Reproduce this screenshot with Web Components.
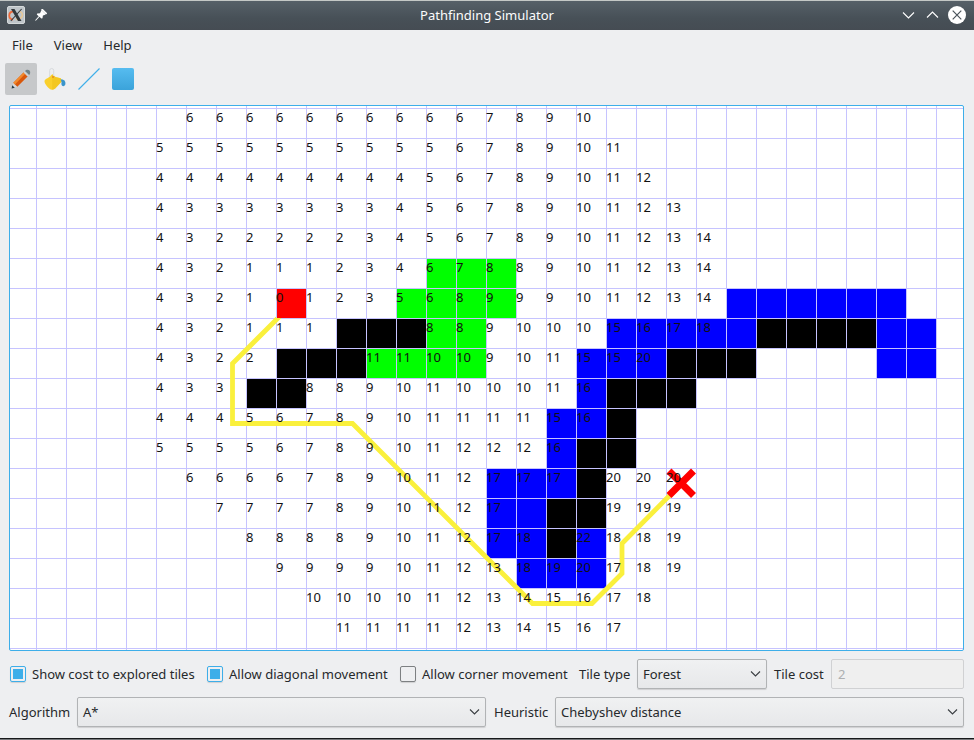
<!DOCTYPE html>
<html lang="en">
<head>
<meta charset="utf-8">
<title>Pathfinding Simulator</title>
<style>
html,body{margin:0;height:740px;overflow:hidden;background:#eeeff1}
body{font-family:"Noto Sans","DejaVu Sans",sans-serif;font-size:13px;color:#26292c}
</style>
</head>
<body>
<path-window></path-window>
<script>
const define = (name, html, setup) => {
  const t = document.createElement('template');
  t.innerHTML = html;
  customElements.define(name, class extends HTMLElement {
    constructor() {
      super();
      this.attachShadow({mode: 'open'}).append(t.content.cloneNode(true));
    }
    connectedCallback() { if (setup) setup(this, this.shadowRoot); }
  });
};

define('title-bar', `
<style>
:host{display:grid;grid-template-columns:200px 1fr 200px;align-items:center;height:29px;flex:none;background:linear-gradient(#566068,#475057 60%,#454c53);color:#fcfcfc}
.l,.r{display:flex;align-items:center;height:28px}
:host{align-items:start}
.l{padding-left:7px;gap:9px}
.r{justify-content:flex-end;padding-right:8px;gap:8px}
.t{text-align:center;line-height:28px}
svg{display:block}
</style>
<div class="l">
<svg width="18" height="18" viewBox="0 0 18 18"><rect x=".5" y=".5" width="17" height="17" rx="1.5" fill="#bfc5c9" stroke="#d5d9da"/><path d="M6 5.500C1 6 1 13 6 13.500" fill="none" stroke="#ef6a3a" stroke-width="1.8"/><path d="M12 5.500C17 6 17 13 9 13.500" fill="none" stroke="#e8c795" stroke-width="1.500"/><path d="M4 3h3.500l7 12H11z" fill="#33383b"/><path d="M14.600 3L3.800 15" stroke="#33383b" stroke-width="1.100"/></svg>
<svg width="13" height="13" viewBox="0 0 13 13"><path fill="#fff" d="M7.500 1L11.800 5.200 10.600 6 8.900 6.600 8.500 9.200 7.300 9.600 5.500 7.800 1.800 11.700 1.100 11.200 4.700 7.200 2.800 5.400 3.200 4.500 6 4.200z" /><path d="M8.200 .7L12.100 4.400" stroke="#fff" stroke-width="1.700" stroke-linecap="round"/></svg>
</div>
<div class="t">Pathfinding Simulator</div>
<div class="r">
<svg width="16" height="16" viewBox="0 0 16 16" fill="none" stroke="#fff" stroke-width="1.100"><path d="M3 5.500L8.500 11l5.500-5.500"/></svg>
<svg width="16" height="16" viewBox="0 0 16 16" fill="none" stroke="#fff" stroke-width="1.100"><path d="M3 10.500L8.500 5l5.500 5.500"/></svg>
<svg width="18" height="18" viewBox="0 0 18 18"><circle cx="9" cy="9" r="9" fill="#fff"/><path d="M4.700 4.700l8.600 8.600M13.300 4.700l-8.600 8.600" stroke="#4b545b" stroke-width="1.200"/></svg>
</div>`);

define('menu-item', `
<style>:host{display:block;padding:0 10px;line-height:31px}</style><slot></slot>`);

define('tool-button', `
<style>
:host{display:grid;place-items:center;width:32px;height:32px;border-radius:2px}
:host([pressed]){background:#c6c8ca}
</style><slot></slot>`);

define('tool-bar', `
<style>:host{display:flex;gap:2px;padding:2px 5px 0;height:44px;flex:none;box-sizing:border-box}svg{display:block}</style>
<tool-button pressed><svg width="22" height="22" viewBox="0 0 22 22">
<path d="M2 20l1.300-5 3.800 3.800z" fill="#d5d9db"/><path d="M1.600 20.400l.6-3.200 2.600 2.600z" fill="#263d49"/><path d="M3.300 14.800L13.800 4.300l4 4L7.300 18.800z" fill="#d9580b"/><path d="M3.300 14.800L13.800 4.300l1.500 1.500L4.900 16.400z" fill="#f28a2c"/><path d="M13.500 4.600l1.600-1.600 4 4-1.600 1.600z" fill="#c9d2d5"/><path d="M15 3c1.200-1.700 3.500-1.700 4.500-.5s1 3.200-.4 4.500z" fill="#6f8287"/></svg></tool-button>
<tool-button><svg width="24" height="24" viewBox="0 0 24 24">
<path d="M1.500 14c.2-1.600 1.800-2.300 3.500-3L9.200 7.200 12.500 10l5.200 1.300 1.500 2.700-7 7.500c-1.800 1.700-4 1.700-6 0-2-1.800-4.800-5-4.700-7.500z" fill="#fad02c"/><path d="M9.200 7.200L12.500 10l5.200 1.300 1.500 2.700-7 7.500-3 1.200z" fill="#eec11d" opacity=".6"/><path d="M6.700 10V3.500q0-2 2-2t2 2V9" fill="none" stroke="#d7dadd"/><circle cx="10" cy="10" r="1" fill="#e58c23"/><path d="M17.500 12.500c4-.6 5.300 2 4.900 4.500-.3 2.500-3.300 3-3.900.6-.3-1.300.8-2.500-1-5.100z" fill="#3a95cb"/></svg></tool-button>
<tool-button><svg width="22" height="22" viewBox="0 0 22 22"><path d="M.5 21.500l21-21" stroke="#3daee9" stroke-width="1.100"/></svg></tool-button>
<tool-button><svg width="22" height="22" viewBox="0 0 22 22"><defs><linearGradient id="g" x2="0" y2="1"><stop stop-color="#56bcf0"/><stop offset="1" stop-color="#3ba3da"/></linearGradient></defs><rect width="22" height="22" rx="2" fill="url(#g)"/></svg></tool-button>`);

/* Tile map. Each row is "firstColumn: tile tile ..."; a tile is an optional cost
   followed by a terrain letter (g forest, b water, k wall, s start, t target, _ open). */
const ROWS = [
  '0:',
  '6: 6 6 6 6 6 6 6 6 6 6 7 8 9 10',
  '5: 5 5 5 5 5 5 5 5 5 5 6 7 8 9 10 11',
  '5: 4 4 4 4 4 4 4 4 4 5 6 7 8 9 10 11 12',
  '5: 4 3 3 3 3 3 3 3 4 5 6 7 8 9 10 11 12 13',
  '5: 4 3 2 2 2 2 2 3 4 5 6 7 8 9 10 11 12 13 14',
  '5: 4 3 2 1 1 1 2 3 4 6g 7g 8g 8 9 10 11 12 13 14',
  '5: 4 3 2 1 0s 1 2 3 5g 6g 8g 9g 9 9 10 11 12 13 14 b b b b b b',
  '5: 4 3 2 1 1 1 k k k 8g 8g 9 10 10 10 15b 16b 17b 18b b k k k k b b',
  '5: 4 3 2 2 k k k 11g 11g 10g 10g 9 10 11 15b 15b 20b k k k _ _ _ _ b b',
  '5: 4 3 3 k k 8 8 9 10 11 10 10 10 11 16b k k k',
  '5: 4 4 4 5 6 7 8 9 10 11 11 11 11 15b 16b k',
  '5: 5 5 5 5 6 7 8 9 10 11 12 12 12 16b k k',
  '6: 6 6 6 6 7 8 9 10 11 12 17b 17b 17b k 20 20 20t',
  '7: 7 7 7 7 8 9 10 11 12 17b b k k 19 19 19',
  '8: 8 8 8 8 9 10 11 12 17b 18b k 22b 18 18 19',
  '9: 9 9 9 9 10 11 12 13 18b 19b 20b 17 18 19',
  '10: 10 10 10 10 11 12 13 14 15 16 17 18',
  '11: 11 11 11 11 12 13 14 15 16 17',
  '0:'
];
define('tile-map', `
<style>
:host{display:block;position:relative;height:546px;flex:none;margin:0 10px 0 9px;box-sizing:border-box;border:1px solid #3daee9;border-radius:2px;background:#fff;overflow:hidden;color:#111}
.grid{display:grid;grid-template-columns:repeat(32,30px);grid-auto-rows:30px;margin:-28px 0 0 -4px;position:relative}
.c{box-sizing:border-box;border:solid #c6c3ff;border-width:1px 0 0 1px;background-clip:padding-box}
.g{background-color:#0f0}.b{background-color:#00f}.k{background-color:#000}
.s{background-color:#f00;position:relative;z-index:2}
.c span{display:block;position:relative;z-index:3;margin-left:-1px;line-height:17px}
svg{position:absolute;left:0;top:0;z-index:1}
</style>
<div class="grid"></div>
<svg width="953" height="544" viewBox="10 106 953 544" fill="none"><path d="M292.500 303.500l-60 60v60h120l180 180h59.500l30-30v-30l59.500-60" stroke="#faf03c" stroke-width="4.800"/><path d="M669 471l24.500 24.500M693.500 471L669 495.500" stroke="#f00" stroke-width="7"/></svg>`, (el, root) => {
  const grid = root.querySelector('.grid');
  for (const row of ROWS) {
    const [first, rest] = row.split(':');
    const tiles = rest.trim().split(' ');
    for (let c = 0; c < 32; c++) {
      const m = /^(\d*)(\D?)$/.exec(tiles[c - first] || '');
      const d = document.createElement('div');
      d.className = 'c ' + m[2];
      if (m[1]) {
        const s = document.createElement('span');
        s.textContent = m[1];
        d.append(s);
      }
      grid.append(d);
    }
  }
});

define('check-box', `
<style>
:host{display:flex;align-items:center;gap:6px;white-space:nowrap}
i{box-sizing:border-box;width:16px;height:16px;border:1px solid #7d8082;border-radius:2px;display:grid;place-items:center;box-shadow:0 1px 1px #0002;margin-top:-1px}
:host([checked]) i{border-color:#3daee9}
:host([checked]) i::after{content:"";width:10px;height:10px;background:#3daee9}
</style><i></i><slot></slot>`);

define('combo-box', `
<style>
:host{display:flex;align-items:center;justify-content:space-between;box-sizing:border-box;height:30px;padding:0 5px;border:1px solid #b1b3b5;border-radius:2px;background:linear-gradient(#f0f1f2,#e7e8ea);box-shadow:0 1px 1px #0002;white-space:nowrap}
</style><slot></slot><svg width="12" height="12" viewBox="0 0 12 12" fill="none" stroke="#3a3e42" stroke-width="1.100"><path d="M2 3.500L6.500 8l4.500-4.500"/></svg>`);

define('cost-field', `
<style>:host{display:block;box-sizing:border-box;height:30px;line-height:28px;padding:0 6px;border:1px solid #d0d1d3;border-radius:2px;background:#efefef;color:#adafb1}</style><slot></slot>`);

define('options-panel', `
<style>
:host{display:flex;flex-direction:column;gap:8px;padding:8px 10px 0 9px;box-sizing:border-box}
div{display:flex;align-items:center;height:30px}
span{white-space:nowrap}
</style>
<div>
<check-box checked style="width:196px;margin-left:1px">Show cost to explored tiles</check-box>
<check-box checked style="width:193px;margin-left:1px">Allow diagonal movement</check-box>
<check-box style="width:179px;flex:none">Allow corner movement</check-box>
<span style="width:58px">Tile type</span>
<combo-box style="width:130px">Forest</combo-box>
<span style="margin-left:7px;width:57px">Tile cost</span>
<cost-field style="flex:1">2</cost-field>
</div>
<div>
<span style="width:68px">Algorithm</span>
<combo-box style="width:409px">A*</combo-box>
<span style="margin-left:8px;width:61px">Heuristic</span>
<combo-box style="flex:1">Chebyshev distance</combo-box>
</div>`);

define('path-window', `
<style>
:host{display:flex;flex-direction:column;height:740px;width:974px;box-sizing:border-box;border-top:1px solid #c4c8c6}
nav{display:flex;height:31px;flex:none;padding-left:2px}
nav menu-item{margin-right:1px}
options-panel{flex:1}
footer{flex:none;height:2px;background:linear-gradient(#17191b 1px,#77797c 1px)}
</style>
<title-bar></title-bar>
<nav><menu-item>File</menu-item><menu-item>View</menu-item><menu-item>Help</menu-item></nav>
<tool-bar></tool-bar>
<tile-map></tile-map>
<options-panel></options-panel>
<footer></footer>`);
</script>
</body>
</html>
